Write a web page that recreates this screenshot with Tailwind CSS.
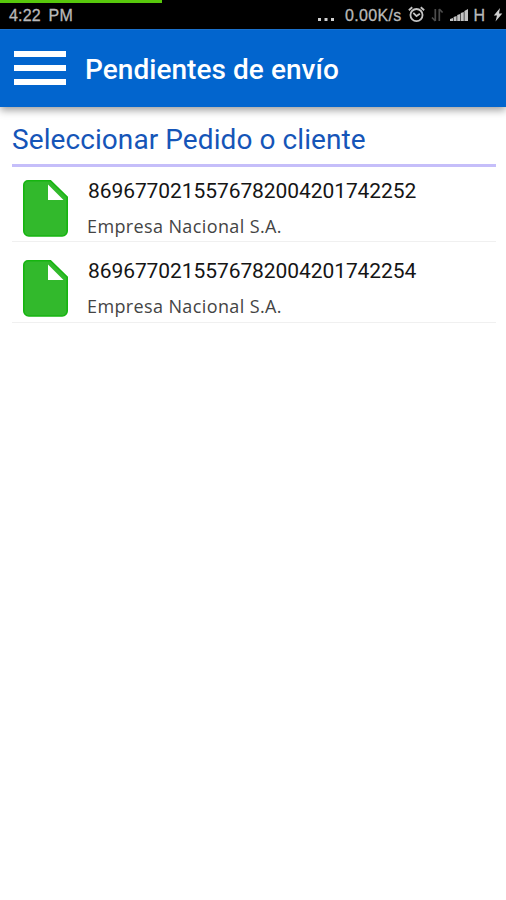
<!DOCTYPE html>
<html lang="es">
<head>
    <meta charset="UTF-8">
    <meta name="viewport" content="width=device-width, initial-scale=1.0">
    <title>Pendientes de envío</title>
    <script src="https://cdn.jsdelivr.net/npm/@tailwindcss/browser@4"></script>
</head>
<body class="bg-white h-screen overflow-hidden font-['Roboto',sans-serif]">

    <!-- Status bar -->
    <div class="relative h-[29px] bg-black text-[#b9b9b9] flex items-center justify-between pl-[9px] pr-[3px] pt-[2px] font-['Liberation_Sans',sans-serif] text-[16px] leading-none">
        <div class="absolute left-0 top-0 w-[162px] h-[3px] bg-[#58c80c]"></div>
        <span class="tracking-[0.2px] [word-spacing:3px] [-webkit-text-stroke:0.3px_#b9b9b9]">4:22 PM</span>
        <div class="flex items-center">
            <svg class="w-[18px] h-[16px] mr-[10px] mt-[-2px]" viewBox="0 0 18 16" fill="#d0d0d0">
                <path d="M1 11h3v3H1zM7.500 11h3v3h-3zM14 11h3v3h-3z"/>
            </svg>
            <span class="tracking-[0.3px] [-webkit-text-stroke:0.3px_#b9b9b9]">0.00K/s</span>
            <svg class="w-[17px] h-[17px] ml-[7px] mt-[-2px]" viewBox="0 0 16 16" fill="none" stroke="#c4c4c4" stroke-width="1.7">
                <circle cx="8" cy="8.5" r="5.7"/>
                <path d="M5 6.5l3 3 3.2-2.2M.8 4L4 1.200M15.200 4L12 1.200"/>
            </svg>
            <svg class="w-[13px] h-[16px] ml-[6px] mt-[-2px]" viewBox="0 0 13 16" fill="none" stroke="#4c4c4c" stroke-width="1.7">
                <path d="M4.3 2v12M1 10.500l3.300 3.500M8.300 14V2M8.300 2l3.300 3.500"/>
            </svg>
            <svg class="w-[19px] h-[16px] ml-[6px] mt-[-2px]" viewBox="0 0 19 16" fill="#c4c4c4">
                <path d="M0 14v-2l3-1v3zM3.600 14v-4l3-1v5zM7.200 14V8l3-1v7zM10.800 14V6l3-1v9zM14.400 14V4L18 2v12z"/>
            </svg>
            <span class="ml-[4px] [-webkit-text-stroke:0.3px_#b9b9b9]">H</span>
            <svg class="w-[10px] h-[16px] ml-[8px] mt-[-2px]" viewBox="0 0 10 16" fill="#d0d0d0">
                <path d="M7 1L.8 8.500H4L2.500 14.500 9.300 6.500H6z"/>
            </svg>
        </div>
    </div>

    <!-- Header -->
    <header class="h-[78px] bg-[#0265ce] border-t border-[#1a70cb] flex items-center pl-[14px] shadow-[0_3px_8px_rgba(0,0,0,0.4)]">
        <button class="flex flex-col gap-[8px] w-[52px] mr-[19px] mt-[-2px]" aria-label="Menú">
            <span class="h-[6px] bg-white"></span>
            <span class="h-[6px] bg-white"></span>
            <span class="h-[6px] bg-white"></span>
        </button>
        <h1 class="pt-[3px] text-white text-[28px] leading-[32px] font-medium tracking-[0.05px] whitespace-nowrap">Pendientes de envío</h1>
    </header>

    <!-- Pending orders -->
    <main class="pl-[12px] pr-[10px] pt-[15px]">
        <h2 class="h-[42px] pt-px text-[28px] leading-[34px] tracking-[0.08px] text-[#1555b8] whitespace-nowrap">Seleccionar Pedido o cliente</h2>
        <div class="h-[3px] bg-[#c5befa]"></div>

        <ul>
            <li class="h-[75px] border-b border-[#f0f0f0] flex pl-[11px] pt-[13px]">
                <svg class="w-[45px] h-[57px] shrink-0" viewBox="0 0 45 57">
                    <path d="M5 .8H27.500L44.200 17V51a5 5 0 0 1-5 5H5.800a5 5 0 0 1-5-5V5a4.200 4.200 0 0 1 4.200-4.200z" fill="#32b92c" stroke="#16b510" stroke-width="1.6"/>
                    <path d="M25 4.500V20h15.500z" fill="#fff"/>
                </svg>
                <div class="ml-[19px] mt-[-2px]">
                    <p class="pl-px text-[21px] leading-[26px] text-[#151515] tracking-[-0.08px]">8696770215576782004201742252</p>
                    <p class="mt-[10px] font-['Open_Sans',sans-serif] text-[18px] leading-[24px] tracking-[0.38px] text-[#444]">Empresa Nacional S.A.</p>
                </div>
            </li>
            <li class="h-[81px] border-b border-[#f0f0f0] flex pl-[11px] pt-[18px]">
                <svg class="w-[45px] h-[57px] shrink-0" viewBox="0 0 45 57">
                    <path d="M5 .8H27.500L44.200 17V51a5 5 0 0 1-5 5H5.800a5 5 0 0 1-5-5V5a4.200 4.200 0 0 1 4.200-4.200z" fill="#32b92c" stroke="#16b510" stroke-width="1.6"/>
                    <path d="M25 4.500V20h15.500z" fill="#fff"/>
                </svg>
                <div class="ml-[19px] mt-[-2px]">
                    <p class="pl-px text-[21px] leading-[26px] text-[#151515] tracking-[-0.08px]">8696770215576782004201742254</p>
                    <p class="mt-[10px] font-['Open_Sans',sans-serif] text-[18px] leading-[24px] tracking-[0.38px] text-[#444]">Empresa Nacional S.A.</p>
                </div>
            </li>
        </ul>
    </main>

</body>
</html>
